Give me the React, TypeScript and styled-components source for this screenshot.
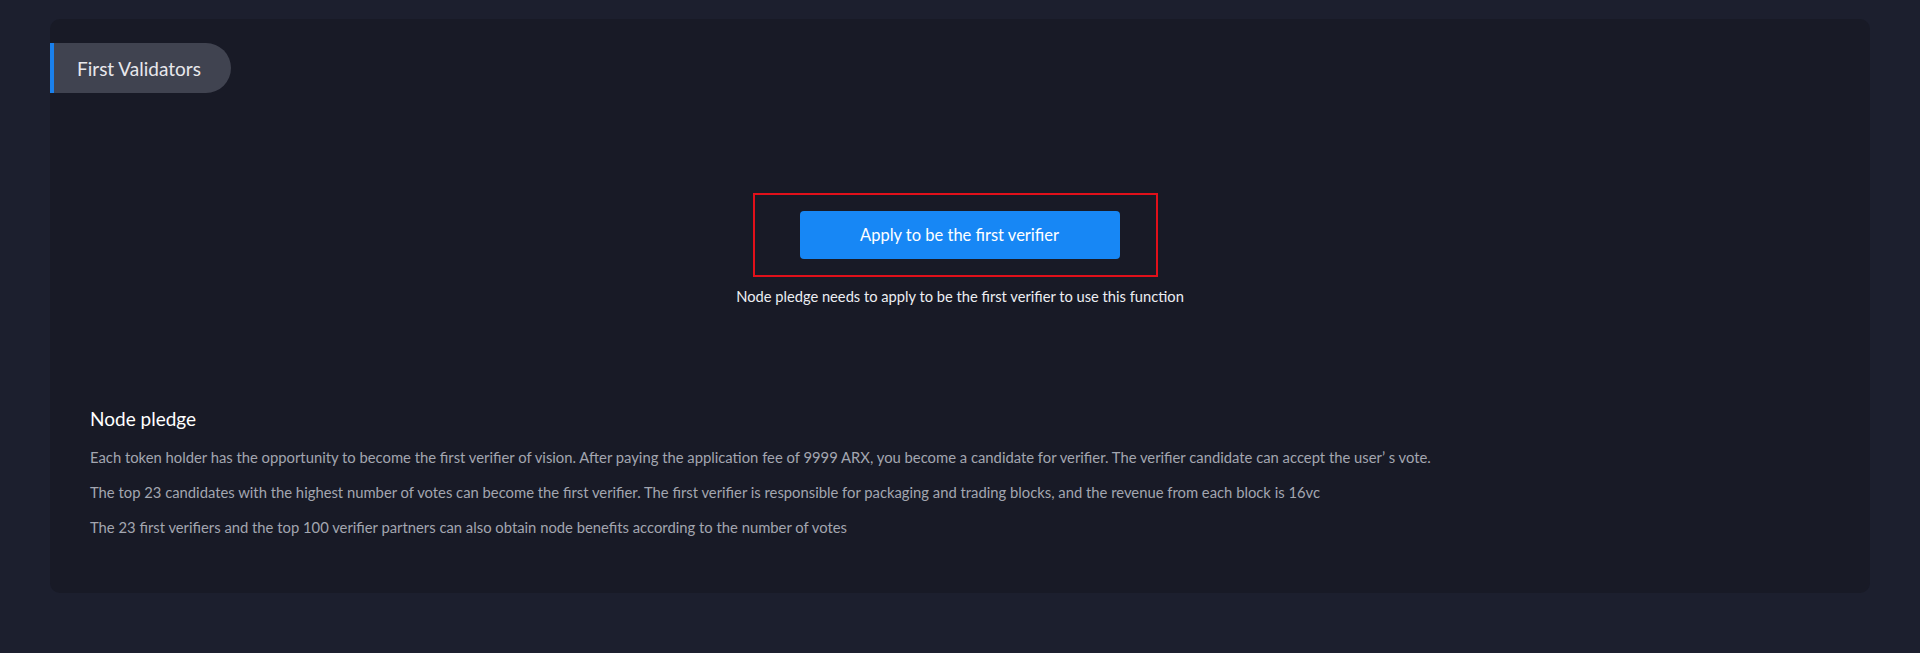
import React from "react";
import styled, { createGlobalStyle } from "styled-components";

const Global = createGlobalStyle`
  html, body { margin: 0; padding: 0; background: #1c1f2e; }
  body { font-family: Lato, "Noto Sans", sans-serif; }
`;

const Page = styled.div`
  padding: 19px 50px 60px 50px;
  background: #1c1f2e;
  min-height: 653px;
  box-sizing: border-box;
`;

const Card = styled.section`
  background: #181a26;
  border-radius: 10px;
  height: 574px;
  box-sizing: border-box;
  display: flex;
  flex-direction: column;
  padding-top: 24px;
`;

const Tab = styled.div`
  align-self: flex-start;
  height: 50px;
  width: 181px;
  box-sizing: border-box;
  background: #404350;
  border-left: 4px solid #1a80ec;
  border-radius: 0 25px 25px 0;
  display: flex;
  align-items: center;
  padding-left: 23px;
  color: #e8e8ec;
  font-size: 19px;
`;

const Center = styled.div`
  display: flex;
  flex-direction: column;
  align-items: center;
  margin-top: 100px;
`;

const Highlight = styled.div`
  width: 405px;
  height: 84px;
  box-sizing: border-box;
  border: 2px solid #e0101a;
  display: flex;
  align-items: center;
  padding: 0 36px 0 45px;
  margin-right: 10px;
`;

const ApplyButton = styled.button`
  width: 320px;
  height: 48px;
  flex-shrink: 0;
  border: none;
  border-radius: 4px;
  background: #1787f5;
  color: #ffffff;
  font-family: inherit;
  font-size: 16.5px;
  cursor: pointer;
`;

const Hint = styled.p`
  margin: 9px 0 0 0;
  font-size: 14.7px;
  line-height: 20px;
  color: #eceef2;
`;

const Info = styled.div`
  margin-top: 100px;
  padding-left: 40px;
  display: flex;
  flex-direction: column;
`;

const InfoTitle = styled.h3`
  margin: 0;
  font-size: 19px;
  font-weight: 400;
  line-height: 26px;
  color: #ffffff;
`;

const InfoText = styled.p`
  margin: 15px 0 0 0;
  font-size: 14.8px;
  line-height: 20px;
  color: #a3a6b0;
  & + & {
    margin-top: 15px;
  }
`;

export default function App() {
  return (
    <>
      <Global />
      <Page>
        <Card>
          <Tab>First Validators</Tab>
          <Center>
            <Highlight>
              <ApplyButton>Apply to be the first verifier</ApplyButton>
            </Highlight>
            <Hint>Node pledge needs to apply to be the first verifier to use this function</Hint>
          </Center>
          <Info>
            <InfoTitle>Node pledge</InfoTitle>
            <InfoText>
              Each token holder has the opportunity to become the first verifier of vision. After paying the application fee of 9999 ARX, you become a candidate for verifier. The verifier candidate can accept the user’ s vote.
            </InfoText>
            <InfoText>
              The top 23 candidates with the highest number of votes can become the first verifier. The first verifier is responsible for packaging and trading blocks, and the revenue from each block is 16vc
            </InfoText>
            <InfoText>
              The 23 first verifiers and the top 100 verifier partners can also obtain node benefits according to the number of votes
            </InfoText>
          </Info>
        </Card>
      </Page>
    </>
  );
}
